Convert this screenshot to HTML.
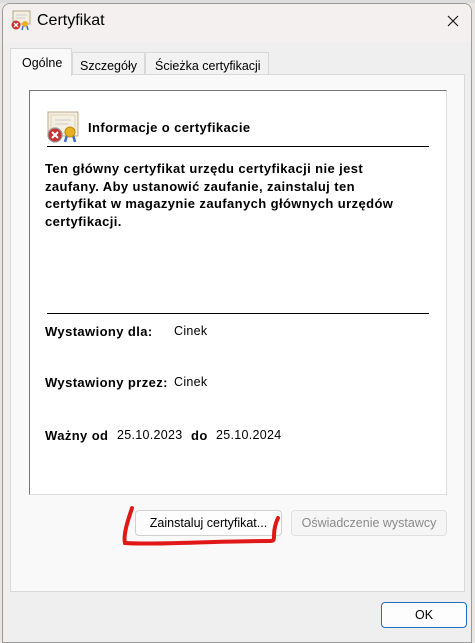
<!DOCTYPE html>
<html><head><meta charset="utf-8"><style>
*{margin:0;padding:0;box-sizing:border-box}
body{width:475px;height:636px;overflow:hidden;background:#e9e6e3;font-family:"Liberation Sans",sans-serif;position:relative}
.a{position:absolute;white-space:nowrap}
.dlg{left:2px;top:3px;width:470px;height:640px;background:#efefef;border:1px solid #9a9a9a;border-radius:8px 8px 0 0;overflow:hidden}
.title{left:0;top:0;width:100%;height:38px;background:#f4f0f0}
.b{font-weight:bold;font-size:13px;color:#000;letter-spacing:0.4px}
.n{font-size:12.5px;color:#000;letter-spacing:0.3px}
.btn{background:#fdfdfd;border:1px solid #d0d0d0;border-radius:4px;font-size:12.5px;text-align:center;line-height:24px}
</style></head><body>
<div class="a" style="left:0;top:0;width:475px;height:3px;background:#ddd"></div>
<div class="a dlg">
 <div class="a title"></div>
</div>
<svg class="a" style="left:10px;top:10px" width="22" height="20" viewBox="0 0 22 20">
 <rect x="3" y="1" width="17" height="13" fill="#f4efe0" stroke="#b8a98a"/>
 <line x1="6" y1="5" x2="17" y2="5" stroke="#ccc"/><line x1="6" y1="8" x2="15" y2="8" stroke="#ccc"/>
 <circle cx="15" cy="14" r="3" fill="#e8b020"/><path d="M13 16 l-1 4 M17 16 l1 4" stroke="#3a6bd0" stroke-width="1.5"/>
 <circle cx="6" cy="15" r="4.5" fill="#c83232"/><path d="M4 13 l4 4 M8 13 l-4 4" stroke="#fff" stroke-width="1.3"/>
</svg>
<div class="a" style="left:37px;top:12px;font-size:16px;color:#000">Certyfikat</div>
<svg class="a" style="left:447px;top:15px" width="12" height="12"><path d="M1 1L11 11M11 1L1 11" stroke="#111" stroke-width="1.1"/></svg>
<div class="a" style="left:10px;top:74px;width:455px;height:518px;background:#f9f9f9;border:1px solid #d9d9d9"></div>
<div class="a" style="left:72px;top:52px;width:73px;height:22px;background:#f2f2f2;border:1px solid #d9d9d9;border-bottom:none;font-size:12.5px;padding:6px 0 0 7px">Szczegóły</div>
<div class="a" style="left:145px;top:52px;width:124px;height:22px;background:#f2f2f2;border:1px solid #d9d9d9;border-bottom:none;font-size:12.5px;padding:6px 0 0 9px">Ścieżka certyfikacji</div>
<div class="a" style="left:10px;top:48px;width:62px;height:28px;background:#f9f9f9;border:1px solid #d9d9d9;border-bottom:none;font-size:12.5px;padding:7px 0 0 11px">Ogólne</div>
<div class="a" style="left:29px;top:90px;width:418px;height:405px;background:#fff;border-left:1px solid #777;border-top:1px solid #777;border-right:1px solid #ddd;border-bottom:1px solid #ddd"></div>
<svg class="a" style="left:46px;top:111px" width="34" height="32" viewBox="0 0 34 32">
 <rect x="2" y="1" width="30" height="24" fill="#f4efe0" stroke="#b8a98a"/>
 <rect x="5" y="4" width="24" height="18" fill="none" stroke="#ddd3b8"/>
 <line x1="9" y1="9" x2="25" y2="9" stroke="#ccc"/><line x1="9" y1="13" x2="22" y2="13" stroke="#ccc"/>
 <path d="M21 24 l-2 7 M27 24 l2 7" stroke="#3a6bd0" stroke-width="2.5"/>
 <circle cx="24" cy="21" r="5" fill="#e8b020" stroke="#b98a10"/>
 <circle cx="9" cy="24" r="7" fill="#c83232" stroke="#999" stroke-width="1.2"/><path d="M6 21 l6 6 M12 21 l-6 6" stroke="#fff" stroke-width="2"/>
</svg>
<div class="a b" style="left:88px;top:120px">Informacje o certyfikacie</div>
<div class="a" style="left:47px;top:146px;width:382px;height:1px;background:#000"></div>
<div class="a b" style="left:45px;top:160px;line-height:17.5px">Ten główny certyfikat urzędu certyfikacji nie jest<br>zaufany. Aby ustanowić zaufanie, zainstaluj ten<br>certyfikat w magazynie zaufanych głównych urzędów<br>certyfikacji.</div>
<div class="a" style="left:47px;top:313px;width:382px;height:1px;background:#000"></div>
<div class="a b" style="left:45px;top:324px">Wystawiony dla:</div>
<div class="a n" style="left:174px;top:324px">Cinek</div>
<div class="a b" style="left:45px;top:375px">Wystawiony przez:</div>
<div class="a n" style="left:174px;top:375px">Cinek</div>
<div class="a b" style="left:45px;top:428px">Ważny od</div>
<div class="a n" style="left:117px;top:428px">25.10.2023</div>
<div class="a b" style="left:191px;top:428px">do</div>
<div class="a n" style="left:216px;top:428px">25.10.2024</div>
<div class="a btn" style="left:135px;top:510px;width:147px;height:26px">Zainstaluj certyfikat...</div>
<div class="a btn" style="left:291px;top:510px;width:156px;height:26px;background:#f5f5f5;border-color:#e0e0e0;color:#8a8a8a">Oświadczenie wystawcy</div>
<svg class="a" style="left:120px;top:505px" width="170" height="45"><path d="M12 3 C8 15,3 30,5 38 C40 40,90 36,150 36 C158 36,150 30,158 13" fill="none" stroke="#e01818" stroke-width="4" stroke-linecap="round"/></svg>
<div class="a btn" style="left:381px;top:602px;width:86px;height:26px;border-color:#1f6fc4">OK</div>
</body></html>
